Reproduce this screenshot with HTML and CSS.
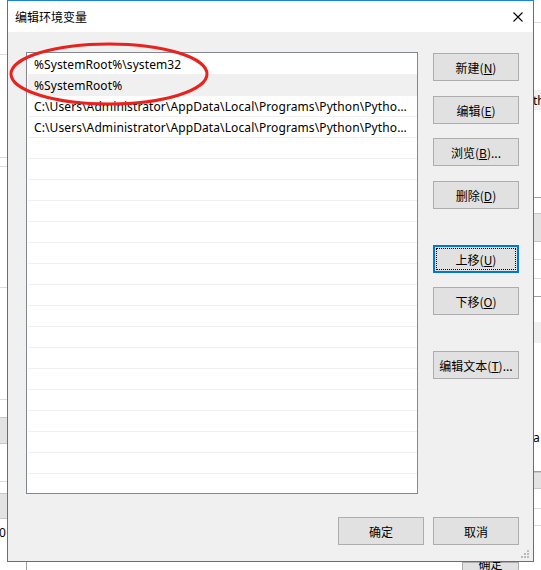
FILE: index.html
```html
<!DOCTYPE html>
<html lang="zh-CN">
<head>
<meta charset="utf-8">
<title>编辑环境变量</title>
<link rel="stylesheet" href="styles.css">
</head>
<body>
<div class="desktop">
  <div class="bg-left">
    <div class="hl" style="top:54px"></div>
    <div class="hl" style="top:157px"></div>
    <div class="hl" style="top:166px"></div>
    <div class="hl" style="top:287px"></div>
    <div class="hl" style="top:399px"></div>
    <div class="gbox" style="top:417px;height:27px"></div>
    <div class="hl" style="top:481px"></div>
    <div class="gbox" style="top:493px;height:26px"></div>
    <span class="bgtext" style="top:526px;left:-1px">0</span>
  </div>
  <div class="bg-right">
    <div class="hl" style="top:22px"></div>
    <div class="lbox" style="top:90px;height:20px"></div>
    <span class="bgtext" style="top:94px;left:0">th</span>
    <div class="hl dark" style="top:197px"></div>
    <div class="gbox" style="top:213px;height:29px"></div>
    <div class="hl" style="top:259px"></div>
    <div class="hl" style="top:278px"></div>
    <div class="hl dark" style="top:296px"></div>
    <div class="lbox" style="top:322px;height:21px"></div>
    <span class="bgtext" style="top:431px;left:0">a</span>
    <div class="hl dark" style="top:471px"></div>
    <div class="gbox" style="top:472px;height:17px"></div>
    <div class="hl" style="top:508px"></div>
    <div class="hl" style="top:525px"></div>
  </div>
  <div class="bg-bottom">
    <div class="vl"></div>
    <div class="bgbtn"><span>确定</span></div>
  </div>

  <div class="dialog">
    <div class="titlebar">
      <span class="title">编辑环境变量</span>
      <svg class="close" width="10" height="10" viewBox="0 0 10 10"><path d="M0.5 0.5 L9.5 9.5 M9.5 0.5 L0.5 9.5" stroke="#000" stroke-width="1.1" fill="none"/></svg>
    </div>
    <div class="body">
      <div class="main">
        <div class="list">
          <div class="row">%SystemRoot%\system32</div>
          <div class="row sel">%SystemRoot%</div>
          <div class="row">C:\Users\Administrator\AppData\Local\Programs\Python\Python36\Scripts\</div>
          <div class="row">C:\Users\Administrator\AppData\Local\Programs\Python\Python36\</div>
          <div class="row"></div><div class="row"></div><div class="row"></div><div class="row"></div>
          <div class="row"></div><div class="row"></div><div class="row"></div><div class="row"></div>
          <div class="row"></div><div class="row"></div><div class="row"></div><div class="row"></div>
          <div class="row"></div><div class="row"></div><div class="row"></div><div class="row"></div>
          <div class="row"></div><div class="row"></div>
        </div>
        <div class="side">
          <button class="btn b1">新建(<u>N</u>)</button>
          <button class="btn b2">编辑(<u>E</u>)</button>
          <button class="btn b3">浏览(<u>B</u>)...</button>
          <button class="btn b4">删除(<u>D</u>)</button>
          <button class="btn b5 focus"><span class="focus-ring">上移(<u>U</u>)</span></button>
          <button class="btn b6">下移(<u>O</u>)</button>
          <button class="btn b7">编辑文本(<u>T</u>)...</button>
        </div>
      </div>
      <div class="footer">
        <button class="btn">确定</button>
        <button class="btn">取消</button>
      </div>
    </div>
    <svg class="grip" width="9" height="9" viewBox="0 0 9 9">
      <g fill="#bcbcbc">
        <rect x="6" y="0" width="2" height="2"/>
        <rect x="3" y="3" width="2" height="2"/><rect x="6" y="3" width="2" height="2"/>
        <rect x="0" y="6" width="2" height="2"/><rect x="3" y="6" width="2" height="2"/><rect x="6" y="6" width="2" height="2"/>
      </g>
    </svg>
  </div>

  <svg class="annot" width="541" height="570" viewBox="0 0 541 570">
    <ellipse cx="109" cy="74" rx="98" ry="30" fill="none" stroke="#e8231f" stroke-width="3"/>
  </svg>
</div>
</body>
</html>
```
FILE: styles.css
```css
* { box-sizing: border-box; }
html, body { margin: 0; padding: 0; }
body {
  background: #ffffff;
  font-family: "Noto Sans", "Noto Sans CJK SC", sans-serif;
  font-size: 12px;
  color: #000;
}
.desktop {
  position: relative;
  width: 541px;
  height: 570px;
  overflow: hidden;
  background: #fff;
}

/* background window pieces */
.bg-left { position: absolute; left: 0; top: 0; width: 8px; height: 570px; }
.bg-right { position: absolute; left: 533px; top: 0; width: 8px; height: 570px; overflow: hidden; }
.bg-bottom { position: absolute; left: 0; top: 562px; width: 541px; height: 8px; overflow: hidden; }
.hl { position: absolute; left: 0; right: 0; height: 1px; background: #dcdcdc; }
.hl.dark { background: #a0a0a0; }
.gbox { position: absolute; left: 0; right: 0; background: #e3e3e3; border-top: 1px solid #c8c8c8; border-bottom: 1px solid #c8c8c8; }
.lbox { position: absolute; left: 0; right: 0; background: #f0f0f0; }
.bgtext { position: absolute; font-size: 12px; line-height: 14px; color: #000; }
.vl { position: absolute; left: 26px; top: 0; width: 1px; height: 8px; background: #a0a0a0; }
.bgbtn {
  position: absolute; left: 462px; top: 0; width: 57px; height: 20px;
  background: #e1e1e1; border: 1px solid #adadad;
  text-align: center; font-family: "Noto Sans CJK SC", sans-serif; font-size: 12px; line-height: 14px;
}
.bgbtn span { position: relative; top: -6px; }

/* dialog */
.dialog {
  position: absolute;
  left: 7px;
  top: 0;
  width: 527px;
  height: 562px;
  border: 1px solid #1883d7;
  background: #f0f0f0;
  display: flex;
  flex-direction: column;
}
.titlebar {
  height: 31px;
  flex: none;
  background: #fff;
  display: flex;
  align-items: center;
  justify-content: space-between;
  padding: 0 10px 1px 7px;
}
.title {
  font-family: "Noto Sans CJK SC", sans-serif;
  font-size: 12px;
  color: #000;
}
.close { display: block; margin-top: 1px; }

.body {
  flex: 1;
  display: flex;
  flex-direction: column;
  padding: 20px 14px 16px 18px;
}
.main {
  display: flex;
  gap: 15px;
}
.list {
  width: 392px;
  height: 442px;
  border: 1px solid #828790;
  background: #fff;
  padding: 1px 0 0 1px;
  overflow: hidden;
}
.row {
  height: 21px;
  line-height: 20px;
  border-bottom: 1px solid #f0f0f0;
  padding: 1px 7px 0 6px;
  white-space: nowrap;
  overflow: hidden;
  text-overflow: ellipsis;
  color: #000;
  letter-spacing: 0.1px;
}
.row.sel { background: #f0f0f0; }

.side {
  width: 86px;
  display: flex;
  flex-direction: column;
}
.btn {
  width: 86px;
  height: 28px;
  margin: 0;
  padding: 0;
  background: #e1e1e1;
  border: 1px solid #adadad;
  font-family: "Noto Sans CJK SC", sans-serif;
  font-size: 12px;
  color: #000;
  display: flex;
  align-items: center;
  justify-content: center;
  flex: none;
}
.btn u { text-underline-offset: 1px; }
.b1 { margin-top: 1px; }
.b2 { margin-top: 15px; }
.b3 { margin-top: 14px; }
.b4 { margin-top: 15px; }
.b5 { margin-top: 36px; }
.b6 { margin-top: 14px; }
.b7 { margin-top: 36px; }
.btn.focus {
  border: 2px solid #0078d7;
  padding: 1px;
}
.focus-ring {
  width: 100%;
  height: 100%;
  border: 1px dotted #000;
  display: flex;
  align-items: center;
  justify-content: center;
}

.footer {
  margin-top: 23px;
  display: flex;
  justify-content: flex-end;
  gap: 9px;
}

.grip {
  position: absolute;
  right: 3px;
  bottom: 2px;
}
.annot {
  position: absolute;
  left: 0;
  top: 0;
  pointer-events: none;
}
```
